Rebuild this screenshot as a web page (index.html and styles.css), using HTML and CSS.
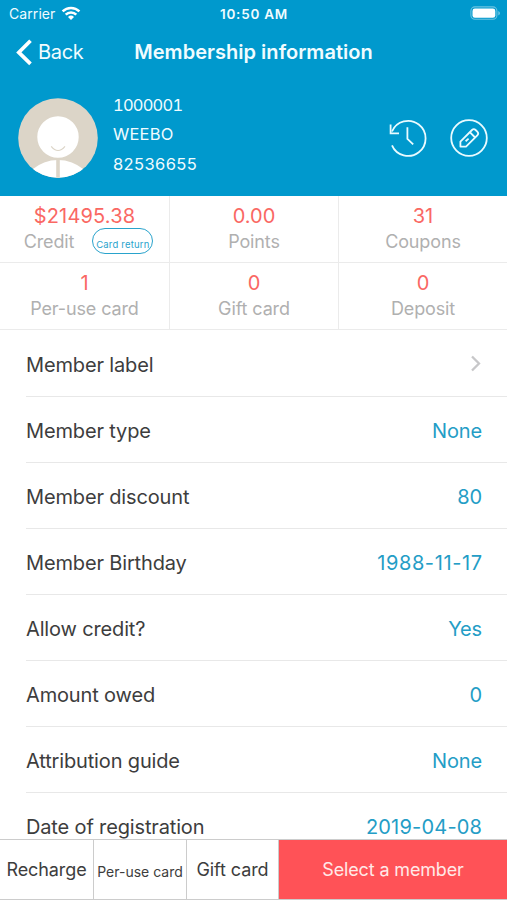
FILE: index.html
```html
<!DOCTYPE html>
<html lang="en">
<head>
<meta charset="utf-8">
<title>Membership information</title>
<link rel="stylesheet" href="styles.css">
</head>
<body>
<div class="screen">
  <header class="header">
    <div class="status">
      <div class="carrier"><span class="carrier-name">Carrier</span>
        <svg width="20" height="15" viewBox="0 0 20 15"><g fill="none" stroke="#fff" stroke-width="2.5"><path d="M1.6 5.4a12 12 0 0 1 16.8 0"/><path d="M4.7 8.7a7.4 7.4 0 0 1 10.6 0"/></g><path fill="#fff" d="M7 10.9a4.3 4.3 0 0 1 6 0l-3 3z"/></svg>
      </div>
      <span class="time">10:50 AM</span>
      <svg class="battery" width="31" height="15" viewBox="0 0 31 15"><rect x=".9" y=".9" width="26" height="12.4" rx="4" fill="none" stroke="#fff" stroke-opacity=".42" stroke-width="1.1"/><rect x="2.5" y="2.5" width="22.8" height="9.3" rx="2.4" fill="#fff"/><path d="M28.4 5v4.4c2-.8 2-3.6 0-4.4z" fill="#fff" fill-opacity=".5"/></svg>
    </div>
    <nav class="nav">
      <div class="back"><svg width="17" height="27" viewBox="0 0 17 27"><path d="M14.5 1.8 2.8 13.4l11.7 11.5" fill="none" stroke="#fff" stroke-width="3.7"/></svg><span>Back</span></div>
      <h1 class="title">Membership information</h1>
    </nav>
    <section class="profile">
      <svg class="avatar" width="80" height="80" viewBox="0 0 80 80"><defs><clipPath id="face"><circle cx="40" cy="40" r="39.8"/></clipPath></defs><g clip-path="url(#face)"><rect width="80" height="80" fill="#dcd5c8"/><ellipse cx="40" cy="94" rx="36" ry="32" fill="#fff"/><path d="M40 60v20" stroke="#dcd5c8" stroke-width="3.6"/><circle cx="40" cy="39" r="21.5" fill="#fff" stroke="#dcd5c8" stroke-width="1.6"/><path d="M33.2 48.4q6.8 8.2 13.8 0" fill="none" stroke="#dcd5c8" stroke-width="1.2"/></g></svg>
      <div class="identity"><span class="id-number">1000001</span><span class="id-name">WEEBO</span><span class="id-phone">82536655</span></div>
      <svg class="action" width="40" height="40" viewBox="0 0 40 40"><g fill="none" stroke="#e9fbff" stroke-width="1.8"><path d="M4 13.5A17.5 17.5 0 1 1 4 27.3"/><path d="M2.6 6.6v8.7h8.4M19.4 9.3v11.5l5.8 5.6"/></g></svg>
      <svg class="action edit" width="40" height="40" viewBox="0 0 40 40"><g fill="none" stroke="#e9fbff" stroke-width="1.8" stroke-linejoin="round"><circle cx="20" cy="20" r="17.8"/><path d="M11.4 28.6v-5L23 12q1.8-1.8 3.6 0l1.7 1.7q1.8 1.8 0 3.6L17 28.6zM20.8 14.2l5.3 5.3M16.6 23.2l3-2.6"/></g></svg>
    </section>
  </header>
  <section class="stats">
    <div class="stat"><b class="s-balance">$21495.38</b><div class="credit"><span class="s-credit">Credit</span><span class="pill"><span class="s-return">Card return</span></span></div></div>
    <div class="stat"><b class="s-points">0.00</b><span>Points</span></div>
    <div class="stat"><b>31</b><span>Coupons</span></div>
    <div class="stat"><b>1</b><span>Per-use card</span></div>
    <div class="stat"><b>0</b><span>Gift card</span></div>
    <div class="stat"><b>0</b><span>Deposit</span></div>
  </section>
  <main class="list">
    <div class="row"><span>Member label</span><svg width="12" height="17" viewBox="0 0 12 17"><path d="m2 1.5 7 7-7 7" fill="none" stroke="#c7c7c9" stroke-width="2.3"/></svg></div>
    <div class="row"><span>Member type</span><em>None</em></div>
    <div class="row"><span>Member discount</span><em>80</em></div>
    <div class="row"><span>Member Birthday</span><em class="date">1988-11-17</em></div>
    <div class="row"><span>Allow credit?</span><em>Yes</em></div>
    <div class="row"><span>Amount owed</span><em>0</em></div>
    <div class="row"><span>Attribution guide</span><em>None</em></div>
    <div class="row"><span>Date of registration</span><em class="date late">2019-04-08</em></div>
  </main>
  <footer class="footer">
    <div class="tab">Recharge</div>
    <div class="tab small">Per-use card</div>
    <div class="tab">Gift card</div>
    <div class="select">Select a member</div>
  </footer>
</div>
</body>
</html>
```
FILE: styles.css
```css
* { box-sizing: border-box; }
body { margin: 0; background: #fff; font-family: Inter, "Liberation Sans", sans-serif; color: #3d3d3d; }
svg { display: block; flex: none; }
.screen { height: 900px; display: flex; flex-direction: column; overflow: hidden; }
.header { flex: none; height: 196px; background: #0099cd; color: #f0fcff; }
.status { height: 27px; display: grid; grid-template-columns: 1fr auto 1fr; align-items: center; padding: 0 6px 0 9px; }
.carrier { display: flex; align-items: center; gap: 6px; font-size: 14px; letter-spacing: .08px; }
.time { font-size: 13.5px; font-weight: 600; letter-spacing: .75px; margin-left: -2px; }
.battery { justify-self: end; }
.nav { height: 50px; display: grid; grid-template-columns: 1fr auto 1fr; align-items: center; padding: 0 16px; }
.back { display: flex; align-items: center; gap: 5px; font-size: 20px; letter-spacing: -.3px; }
.title { margin: 0; font-size: 20px; line-height: 24px; font-weight: 600; letter-spacing: .03px; }
.profile { height: 119px; display: flex; align-items: center; padding: 0 18px 0 18px; }
.avatar { margin-top: 2px; }
.identity { display: flex; flex-direction: column; margin: -3px 0 0 15px; flex: 1; font-size: 16.5px; line-height: 29.3px; }
.identity span { align-self: flex-start; }
.id-number { font-variant-numeric: tabular-nums; letter-spacing: -.8px; }
.id-name { letter-spacing: .2px; }
.id-phone { letter-spacing: .4px; }
.action { margin-top: 2px; }
.action.edit { margin-left: 21px; }
.stats { flex: none; height: 134px; display: grid; grid-template-columns: 170px 169px 1fr; grid-template-rows: 67px 67px; color: #b0b0b0; }
.stat { display: flex; flex-direction: column; align-items: center; padding-top: 8px; border-right: 1px solid #ebebeb; border-bottom: 1px solid #ebebeb; font-size: 18px; line-height: 26px; letter-spacing: -.12px; }
.stat:nth-child(3n) { border-right: 0; }
.stat b { font-size: 20px; font-weight: 400; line-height: 25px; letter-spacing: 0; color: #fa6863; }
.stat .s-balance { letter-spacing: .15px; }
.credit { display: flex; gap: 18px; height: 26px; margin-left: 8px; }
.pill { width: 61px; height: 26px; margin-top: -1px; border: 1.5px solid #29a3cc; border-radius: 13px; display: flex; justify-content: center; color: #29a3cc; font-size: 9.5px; line-height: 31px; letter-spacing: .2px; white-space: nowrap; }
.list { flex: 1; min-height: 0; overflow: hidden; padding-left: 26px; }
.row { height: 66px; padding: 2px 25px 0 0; border-bottom: 1px solid #e8e8e8; display: flex; justify-content: space-between; align-items: center; font-size: 20px; letter-spacing: -.15px; }
.row:first-child { height: 67px; padding-top: 3px; }
.row:first-child svg { margin-top: -2px; }
.row em { font-style: normal; color: #249dc6; }
.row .date { letter-spacing: .6px; margin-right: -.6px; }
.row .late { letter-spacing: .2px; margin-right: -.2px; }
.footer { flex: none; height: 61px; display: grid; grid-template-columns: 94px 93px 92px 1fr; border-top: 1px solid #ccc; border-bottom: 1px solid #ccc; line-height: 60px; text-align: center; font-size: 18px; letter-spacing: -.1px; white-space: nowrap; }
.footer > div { height: 59px; }
.tab { border-right: 1px solid #ccc; }
.tab.small { font-size: 14px; line-height: 63px; letter-spacing: 0; }
.select { background: #ff5257; color: #ffe9e7; line-height: 59px; letter-spacing: -.15px; }
```
